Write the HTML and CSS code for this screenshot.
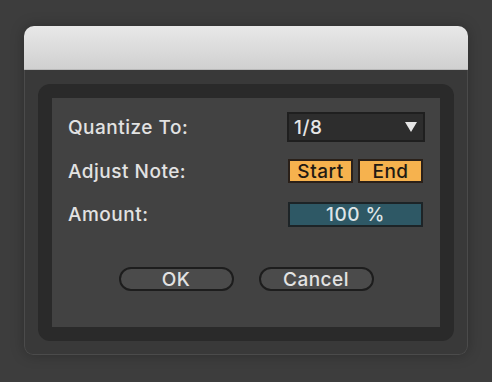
FILE: index.html
```html
<!DOCTYPE html>
<html>
<head>
<meta charset="utf-8">
<link rel="stylesheet" href="styles.css">
</head>
<body>
<div class="window">
  <div class="titlebar"></div>
  <div class="body">
    <div class="frame">
      <div class="panel">
        <div class="row row-q">
          <span class="label">Quantize To:</span>
          <div class="dropdown">
            <span>1/8</span>
            <svg class="caret" width="12" height="10" viewBox="0 0 12 10"><polygon points="0,0 12,0 6,10" fill="#e6e6e6"/></svg>
          </div>
        </div>
        <div class="row row-a">
          <span class="label">Adjust Note:</span>
          <div class="toggles">
            <div class="toggle">Start</div>
            <div class="toggle">End</div>
          </div>
        </div>
        <div class="row row-m">
          <span class="label">Amount:</span>
          <div class="amount">100 %</div>
        </div>
        <div class="actions">
          <div class="btn">OK</div>
          <div class="btn">Cancel</div>
        </div>
      </div>
    </div>
  </div>
</div>
</body>
</html>
```
FILE: styles.css
```css
html, body {
  margin: 0;
  padding: 0;
}
body {
  width: 492px;
  height: 382px;
  background: #3d3d3d;
  font-family: "Inter", "Open Sans", "Liberation Sans", sans-serif;
  overflow: hidden;
  padding-top: 26px;
  box-sizing: border-box;
}
.window {
  margin-left: 24px;
  width: 444px;
  height: 329px;
  border-radius: 10px 10px 9px 9px;
  box-shadow: 0 0 14px rgba(0,0,0,0.25);
  display: flex;
  flex-direction: column;
  overflow: hidden;
}
.titlebar {
  height: 43px;
  background: linear-gradient(#e8e8e8, #d0d0d0);
  border-bottom: 1px solid #b9b9b9;
  flex: none;
}
.body {
  flex: 1;
  background: #393939;
  border: 1px solid #4b4b4b;
  border-top: none;
  border-radius: 0 0 9px 9px;
  padding: 14px 13px 13px 13px;
}
.frame {
  background: #2a2a2a;
  border-radius: 12px;
  padding: 14px;
  height: 257px;
  box-sizing: border-box;
}
.panel {
  background: #424242;
  height: 229px;
  padding: 14px 16px 0 16px;
  box-sizing: border-box;
}
.row {
  display: flex;
  align-items: center;
  justify-content: space-between;
}
.label,
.dropdown,
.toggle,
.amount,
.btn {
  font-size: 19px;
  font-weight: 500;
  letter-spacing: 0.5px;
}
.label {
  color: #e2e2e2;
}
.row-q { height: 30px; }
.row-a { height: 24px; margin-top: 17px; }
.row-m { height: 25px; margin-top: 19px; }
.dropdown {
  width: 138px;
  height: 30px;
  box-sizing: border-box;
  border: 2px solid #1f1f1f;
  background: #2d2d2d;
  display: flex;
  align-items: center;
  justify-content: space-between;
  padding: 0 6px 0 5px;
  color: #e6e6e6;
  margin-right: -1px;
}
.toggles {
  display: flex;
  gap: 5px;
  margin-right: 1px;
}
.toggle {
  width: 65px;
  height: 24px;
  box-sizing: border-box;
  border: 2px solid #2a2019;
  background: #f6b24e;
  color: #1f1a14;
  display: flex;
  align-items: center;
  justify-content: center;
}
.amount {
  width: 135px;
  height: 25px;
  box-sizing: border-box;
  border: 2px solid #1d2427;
  background: #2e5865;
  color: #dfe5e7;
  display: flex;
  align-items: center;
  justify-content: center;
  margin-right: 1px;
}
.actions {
  display: flex;
  justify-content: center;
  gap: 25px;
  margin-top: 40px;
}
.btn {
  width: 115px;
  height: 24px;
  box-sizing: border-box;
  border: 2px solid #1d1d1d;
  border-radius: 12px;
  background: #4b4b4b;
  color: #e2e2e2;
  display: flex;
  align-items: center;
  justify-content: center;
}
```
